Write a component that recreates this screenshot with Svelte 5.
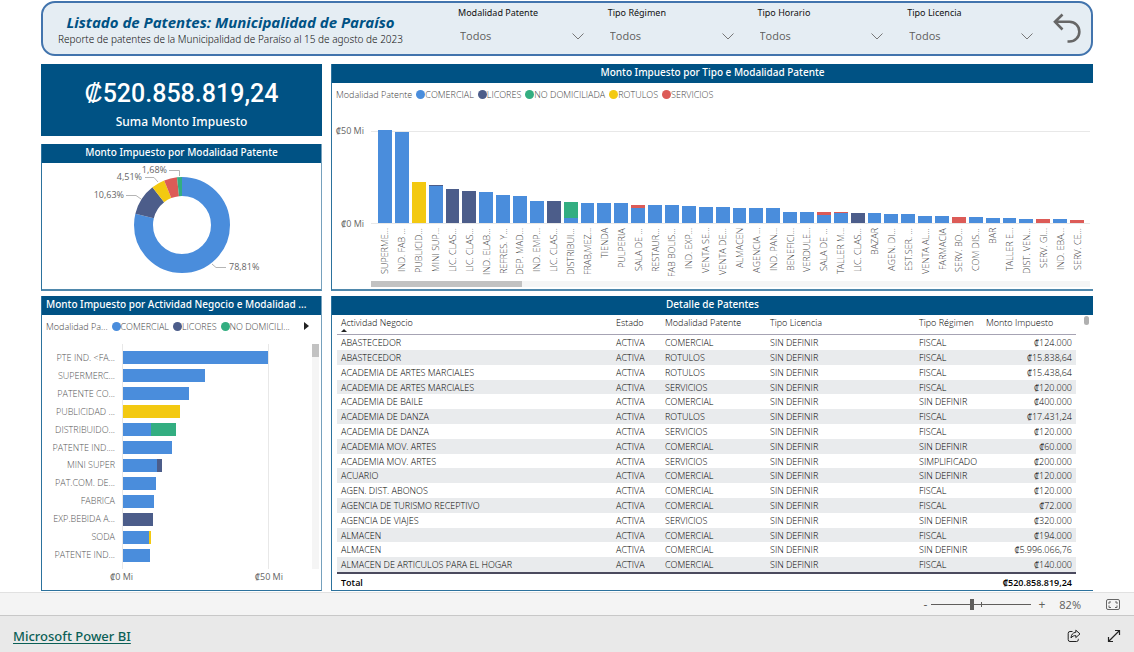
<script>
  const colors = {
    c: '#4a8ddc',
    l: '#4c5d8a',
    n: '#33ae81',
    r: '#f3c911',
    s: '#dc5b57'
  };

  const legend = [
    ['c', 'COMERCIAL'],
    ['l', 'LICORES'],
    ['n', 'NO DOMICILIADA'],
    ['r', 'ROTULOS'],
    ['s', 'SERVICIOS']
  ];

  const shortLegend = [
    ['c', 'COMERCIAL'],
    ['l', 'LICORES'],
    ['n', 'NO DOMICILI...']
  ];

  const filters = ['Modalidad Patente', 'Tipo Régimen', 'Tipo Horario', 'Tipo Licencia'];

  // Each entry: label, then stacked segments from the baseline, in millions.
  const columns = [
    ['SUPERME...', [['c', 51]]],
    ['IND. FAB ...', [['c', 50]]],
    ['PUBLICID...', [['r', 22.5]]],
    ['MINI SUP...', [['c', 20.3], ['l', 0.4]]],
    ['LIC. CLAS...', [['l', 18.6]]],
    ['LIC. CLAS...', [['l', 17.6]]],
    ['IND. ELAB...', [['c', 17.3]]],
    ['REFRES. Y...', [['c', 15.4]]],
    ['DEP. MAD...', [['c', 14.8]]],
    ['IND. EMP...', [['c', 12]]],
    ['LIC. CLAS...', [['l', 12]]],
    ['DISTRIBUI...', [['c', 2.8], ['n', 8.7]]],
    ['FRAB,MEZ...', [['c', 11.2]]],
    ['TIENDA', [['c', 10.9]]],
    ['PULPERIA', [['c', 10.9]]],
    ['SALA DE ...', [['c', 8.5], ['s', 1.6]]],
    ['RESTAUR...', [['c', 9.8]]],
    ['FAB BOLIS...', [['c', 9.8]]],
    ['IND. EXP...', [['c', 9.4]]],
    ['VENTA SE...', [['c', 9]]],
    ['VENTA DE...', [['c', 8.9]]],
    ['ALMACEN', [['c', 8.5]]],
    ['AGENCIA ...', [['c', 8.2]]],
    ['IND. PAN...', [['c', 8.1]]],
    ['BENEFICI...', [['c', 6.3]]],
    ['VERDULE...', [['c', 6.1]]],
    ['SALA DE ...', [['c', 4.6], ['s', 1.4]]],
    ['TALLER M...', [['c', 5.4], ['s', 0.4]]],
    ['LIC. CLAS...', [['l', 5.7]]],
    ['BAZAR', [['c', 5.5]]],
    ['AGEN. DI...', [['c', 5.2]]],
    ['EST.SER. ...', [['c', 5]]],
    ['VENTA AL...', [['c', 4]]],
    ['FARMACIA', [['c', 3.9]]],
    ['SERV. BO...', [['s', 3.3]]],
    ['COM DIS...', [['c', 3.1]]],
    ['BAR', [['c', 2.8]]],
    ['TALLER E...', [['c', 2.5]]],
    ['DIST. VEN...', [['c', 2.4]]],
    ['SERV. GI...', [['s', 2.4]]],
    ['IND. EBA...', [['c', 2.2]]],
    ['SERV. CE...', [['s', 1.9]]]
  ];

  const bars = [
    ['PTE IND. <FA...', [['c', 50]]],
    ['SUPERMERC...', [['c', 28.3]]],
    ['PATENTE CO...', [['c', 22.8]]],
    ['PUBLICIDAD ...', [['r', 19.7]]],
    ['DISTRIBUIDO...', [['c', 9.6], ['n', 8.8]]],
    ['PATENTE IND....', [['c', 16.8]]],
    ['MINI SUPER', [['c', 11.6], ['l', 1.7]]],
    ['PAT.COM. DE...', [['c', 11.5]]],
    ['FABRICA', [['c', 10.6]]],
    ['EXP.BEBIDA A...', [['l', 10.3]]],
    ['SODA', [['c', 9.1], ['r', 0.4]]],
    ['PATENTE IND...', [['c', 9.3]]]
  ];

  const slices = [
    ['c', 78.81, 0],
    ['l', 10.63, 78.81],
    ['r', 4.51, 89.44],
    ['s', 4.37, 93.95],
    ['n', 1.68, 98.32]
  ];

  const rows = [
    ['ABASTECEDOR', 'COMERCIAL', 'FISCAL', '₡124.000'],
    ['ABASTECEDOR', 'ROTULOS', 'FISCAL', '₡15.838,64'],
    ['ACADEMIA DE ARTES MARCIALES', 'ROTULOS', 'FISCAL', '₡15.438,64'],
    ['ACADEMIA DE ARTES MARCIALES', 'SERVICIOS', 'FISCAL', '₡120.000'],
    ['ACADEMIA DE BAILE', 'COMERCIAL', 'SIN DEFINIR', '₡400.000'],
    ['ACADEMIA DE DANZA', 'ROTULOS', 'FISCAL', '₡17.431,24'],
    ['ACADEMIA DE DANZA', 'SERVICIOS', 'FISCAL', '₡120.000'],
    ['ACADEMIA MOV. ARTES', 'COMERCIAL', 'SIN DEFINIR', '₡60.000'],
    ['ACADEMIA MOV. ARTES', 'SERVICIOS', 'SIMPLIFICADO', '₡200.000'],
    ['ACUARIO', 'COMERCIAL', 'SIN DEFINIR', '₡120.000'],
    ['AGEN. DIST. ABONOS', 'COMERCIAL', 'FISCAL', '₡120.000'],
    ['AGENCIA DE TURISMO RECEPTIVO', 'COMERCIAL', 'FISCAL', '₡72.000'],
    ['AGENCIA DE VIAJES', 'SERVICIOS', 'SIN DEFINIR', '₡320.000'],
    ['ALMACEN', 'COMERCIAL', 'FISCAL', '₡194.000'],
    ['ALMACEN', 'COMERCIAL', 'SIN DEFINIR', '₡5.996.066,76'],
    ['ALMACEN DE ARTICULOS PARA EL HOGAR', 'COMERCIAL', 'FISCAL', '₡140.000']
  ];

  let zoom = $state(40);
</script>

<main class="report">
  <header class="banner">
    <div class="heading">
      <h1>Listado de Patentes: Municipalidad de Paraíso</h1>
      <p>Reporte de patentes de la Municipalidad de Paraíso al 15 de agosto de 2023</p>
    </div>
    <div class="filters">
      {#each filters as name, i}
        <div class="filter">
          <label for="filter-{i}">{name}</label>
          <div class="picker">
            <select id="filter-{i}"><option>Todos</option></select>
            <svg width="12" height="7" viewBox="0 0 12 7" aria-hidden="true"><path d="M.5 .5 6 6 11.500 .5" fill="none" stroke="#777" /></svg>
          </div>
        </div>
      {/each}
    </div>
    <button class="back" aria-label="Atrás">
      <svg width="28" height="32" viewBox="0 0 28 32"><path d="M9.500 1.500 2 8.800 9.500 16.500M2 8.800H16.500a9.800 9.800 0 0 1 0 19.700H14.500" fill="none" stroke="#666" stroke-width="2.600" /></svg>
    </button>
  </header>

  <div class="columns">
    <div class="stack">
      <section class="card">
        <strong>₡520.858.819,24</strong>
        <span>Suma Monto Impuesto</span>
      </section>

      <section class="panel closed">
        <h2>Monto Impuesto por Modalidad Patente</h2>
        <svg class="donut" width="280" height="126" viewBox="0 0 280 126">
          <g transform="rotate(-90 140 62)">
            {#each slices as [key, share, start]}
              <circle cx="140" cy="62" r="38.500" fill="none" stroke={colors[key]} stroke-width="19" pathLength="100" stroke-dasharray="{share} {100 - share}" stroke-dashoffset={-start} />
            {/each}
          </g>
          <g fill="none" stroke="#b5b5b5">
            <path d="M170 101 174 104.500H184" />
            <path d="M84 32.500H94L99 36" />
            <path d="M103 14.500H112L116 19" />
            <path d="M127 7.500H137.500V13" />
          </g>
          <g class="donut-text">
            <text x="187" y="107">78,81%</text>
            <text x="82" y="35" text-anchor="end">10,63%</text>
            <text x="100" y="17" text-anchor="end">4,51%</text>
            <text x="125" y="10" text-anchor="end">1,68%</text>
          </g>
        </svg>
      </section>

      <section class="panel closed bottom">
        <h2 class="start">Monto Impuesto por Actividad Negocio e Modalidad ...</h2>
        <div class="legend">
          <span class="legend-title">Modalidad Pa...</span>
          {#each shortLegend as [key, name]}
            <span class="key"><i style="background:{colors[key]}"></i>{name}</span>
          {/each}
          <button class="next" aria-label="Siguiente"><svg width="5" height="8" viewBox="0 0 5 8"><path d="M0 0 5 4 0 8Z" fill="#222" /></svg></button>
        </div>
        <div class="bar-chart">
          <div class="bar-names">
            {#each bars as [name]}<span>{name}</span>{/each}
          </div>
          <div class="bar-plot">
            {#each bars as [, parts]}
              <div class="bar">
                {#each parts as [key, value]}<i style="width:{value * 2}%;background:{colors[key]}"></i>{/each}
              </div>
            {/each}
          </div>
          <div class="vscroll"><i></i></div>
          <div class="bar-axis"><span>₡0 Mi</span><span>₡50 Mi</span></div>
        </div>
      </section>
    </div>

    <div class="stack">
      <section class="panel">
        <h2>Monto Impuesto por Tipo e Modalidad Patente</h2>
        <div class="legend">
          <span class="legend-title">Modalidad Patente</span>
          {#each legend as [key, name]}
            <span class="key"><i style="background:{colors[key]}"></i>{name}</span>
          {/each}
        </div>
        <div class="col-chart">
          <div class="col-axis"><span>₡50 Mi</span><span>₡0 Mi</span></div>
          <div class="col-plot">
            {#each columns as [, parts]}
              <div class="col">
                {#each parts as [key, value]}<i style="height:{value * 2}%;background:{colors[key]}"></i>{/each}
              </div>
            {/each}
          </div>
          <div class="col-names">
            {#each columns as [name]}<span>{name}</span>{/each}
          </div>
          <div class="hscroll"><i></i></div>
        </div>
      </section>

      <section class="panel bottom">
        <h2>Detalle de Patentes</h2>
        <div class="table-area">
          <table>
            <colgroup><col /><col class="w-est" /><col class="w-mod" /><col class="w-lic" /><col class="w-reg" /><col class="w-amt" /></colgroup>
            <thead>
              <tr>
                <th class="sorted">Actividad Negocio</th><th>Estado</th><th>Modalidad Patente</th><th>Tipo Licencia</th><th>Tipo Régimen</th><th>Monto Impuesto</th>
              </tr>
            </thead>
            <tbody>
              {#each rows as [activity, mode, regime, amount]}
                <tr><td>{activity}</td><td>ACTIVA</td><td>{mode}</td><td>SIN DEFINIR</td><td>{regime}</td><td class="amount">{amount}</td></tr>
              {/each}
            </tbody>
            <tfoot>
              <tr><td colspan="4">Total</td><td colspan="2" class="amount">₡520.858.819,24</td></tr>
            </tfoot>
          </table>
          <i class="thumb"></i>
        </div>
      </section>
    </div>
  </div>
</main>

<div class="status">
  <button aria-label="Alejar">-</button>
  <div class="slider">
    <input type="range" min="0" max="100" bind:value={zoom} aria-label="Zoom" />
    <i></i>
  </div>
  <button aria-label="Acercar">+</button>
  <span class="percent">82%</span>
  <button class="fit" aria-label="Ajustar a la página">
    <svg width="14" height="11" viewBox="0 0 14 11" fill="none" stroke="#666"><rect x=".5" y=".5" width="13" height="10" rx="1.500" /><path d="M5 3H3V5M3 6.500V8.500H5M9 3H11V5M11 6.500V8.500H9" /></svg>
  </button>
</div>

<footer>
  <a href="#powerbi">Microsoft Power BI</a>
  <button aria-label="Compartir">
    <svg width="14" height="14" viewBox="0 0 14 14" fill="none" stroke="#222" stroke-linejoin="round"><path d="M5.500 2.500H3A1.800 1.800 0 0 0 1.200 4.300V10.700A1.800 1.800 0 0 0 3 12.500H9.500A1.800 1.800 0 0 0 11.300 10.700V9.800" /><path d="M8.800 1.200 13 4.900 8.800 8.600V6.600C6.600 6.500 5.300 7.300 4 9 4.200 5.800 5.800 3.500 8.800 3.300Z" /></svg>
  </button>
  <button aria-label="Pantalla completa">
    <svg width="14" height="14" viewBox="0 0 14 14" fill="none" stroke="#222" stroke-width="1.200"><path d="M1.500 12.500 12.500 1.500M8 1.500H12.500V6M1.500 8V12.500H6" /></svg>
  </button>
</footer>

<style>
  :global(body) {
    background: #fff;
    font-family: "Open Sans", "Noto Sans", sans-serif;
  }
  h1, h2, p { margin: 0; }
  i { display: block; font-style: normal; }
  svg { display: block; }
  button {
    padding: 0;
    border: 0;
    background: none;
    font: inherit;
    color: inherit;
  }

  .report { padding: 1px 41px 0; }
  .banner {
    display: flex;
    box-sizing: border-box;
    height: 55px;
    border: 2px solid #4274ad;
    border-radius: 14px;
    background: #e5edf3;
  }
  .heading {
    width: 375px;
    flex: none;
    padding-top: 10px;
    text-align: center;
    white-space: nowrap;
  }
  h1 {
    font-size: 15px;
    line-height: 18px;
    font-style: italic;
    font-weight: 700;
    color: #005284;
  }
  p {
    font-family: "Noto Sans", sans-serif;
    font-size: 10px;
    line-height: 17px;
    font-weight: 300;
    color: #111;
  }
  .filters {
    flex: 1;
    display: grid;
    grid-template-columns: repeat(4, 1fr);
    column-gap: 24px;
    padding-left: 40px;
    padding-top: 3px;
  }
  label {
    display: block;
    font-family: "Noto Sans", sans-serif;
    font-size: 9px;
    line-height: 14px;
    color: #111;
  }
  .picker {
    display: flex;
    align-items: center;
    margin-top: 7px;
  }
  select {
    flex: 1;
    appearance: none;
    border: 0;
    padding: 0 2px;
    background: none;
    font: 11px/18px "Open Sans", sans-serif;
    color: #605e5c;
  }
  .back { width: 58px; flex: none; padding: 0 10px 0 20px; }

  .columns {
    display: grid;
    grid-template-columns: minmax(0, 281fr) minmax(0, 762fr);
    column-gap: 9px;
    padding-top: 8px;
  }
  .stack { display: flex; flex-direction: column; }
  .card {
    display: flex;
    flex-direction: column;
    align-items: center;
    padding: 14px 0 2px;
    margin-bottom: 8px;
    background: #005284;
    color: #fff;
  }
  .card strong {
    font: 500 25px/32px Roboto, sans-serif;
  }
  .card span {
    font-family: "Noto Sans", sans-serif;
    font-size: 12px;
    line-height: 24px;
    font-weight: 500;
  }

  .panel {
    border-left: 1px solid #2c729d;
    border-bottom: 2px solid #4f88ac;
    margin-bottom: 5px;
  }
  .closed { border-right: 1px solid #76a1bd; }
  .bottom {
    flex: 1;
    margin-bottom: 1px;
    border-bottom: 1px solid #2c729d;
  }
  h2 {
    height: 19px;
    background: #005284;
    color: #fff;
    font-family: "Noto Sans", sans-serif;
    font-size: 10px;
    line-height: 17px;
    font-weight: 500;
    text-align: center;
    white-space: nowrap;
    overflow: hidden;
  }
  h2.start { padding-left: 4px; text-align: left; }
  .donut { margin: 0 auto; }
  .donut-text { font-size: 9px; fill: #666; }

  .legend {
    display: flex;
    align-items: center;
    height: 22px;
    padding-left: 4px;
    gap: 4px;
    font-size: 9px;
    font-weight: 350;
    color: #444;
    white-space: nowrap;
  }
  .key { display: flex; align-items: center; }
  .key i { width: 9px; height: 9px; border-radius: 50%; }
  .next { margin-left: auto; margin-right: 12px; }

  .bar-chart {
    display: grid;
    grid-template-columns: 73px minmax(0, 1fr) 7px;
    column-gap: 7px;
    padding-right: 2px;
    margin-top: 7px;
  }
  .bar-names, .bar-plot {
    display: grid;
    grid-template-rows: repeat(12, 1fr);
    height: 215px;
    padding: 5px 0;
    align-items: center;
  }
  .bar-names {
    font-size: 9px;
    line-height: 12px;
    font-weight: 350;
    text-align: right;
    color: #555;
    white-space: nowrap;
  }
  .bar-plot {
    margin-right: 36px;
    border-left: 1px solid #e8e8e8;
    border-right: 1px solid #e8e8e8;
  }
  .bar { display: flex; height: 13px; }
  .vscroll { background: #f5f5f5; }
  .vscroll i { height: 13px; background: #c2c2c2; }
  .bar-axis {
    grid-column: 2;
    display: flex;
    justify-content: space-between;
    margin: 0 22px 0 -12px;
    font-size: 9px;
    line-height: 16px;
    color: #666;
  }

  .col-chart {
    display: grid;
    grid-template-columns: 32px minmax(0, 1fr);
    column-gap: 7px;
    padding: 26px 3px 2px 0;
    font-size: 9px;
    color: #666;
  }
  .col-axis {
    display: flex;
    flex-direction: column;
    justify-content: space-between;
    margin: -6px 0;
    line-height: 12px;
    text-align: right;
  }
  .col-plot, .col-names {
    display: grid;
    grid-template-columns: repeat(42, 1fr);
    padding: 0 4px 0 6px;
  }
  .col-plot {
    height: 91px;
    border-top: 1px solid #e8e8e8;
    border-bottom: 1px solid #e8e8e8;
  }
  .col {
    display: flex;
    flex-direction: column-reverse;
    height: 91px;
    margin: 0 2px 0 1px;
  }
  .col i { flex: none; }
  .col-names {
    grid-column: 2;
    height: 54px;
    padding-top: 4px;
    box-sizing: border-box;
    font-weight: 350;
    color: #444;
  }
  .col-names span {
    writing-mode: vertical-rl;
    transform: rotate(180deg);
    text-align: right;
    justify-self: center;
    line-height: 12px;
    white-space: nowrap;
  }
  .hscroll {
    grid-column: 2;
    margin-top: 3px;
    height: 6px;
    background: #f5f5f5;
  }
  .hscroll i { width: 21%; height: 6px; background: #c2c2c2; }

  .table-area {
    display: flex;
    align-items: flex-start;
    padding: 0 4px 0 5px;
  }
  table {
    flex: 1;
    width: 100%;
    table-layout: fixed;
    border-collapse: collapse;
    font-size: 9px;
    line-height: 13px;
    color: #000;
    white-space: nowrap;
  }
  .w-est { width: 49px; }
  .w-mod { width: 105px; }
  .w-lic { width: 149px; }
  .w-reg { width: 67px; }
  .w-amt { width: 94px; }
  th, td { padding: 0 4px; text-align: left; font-weight: 350; }
  th {
    height: 18px;
    border-bottom: 1px solid #a6a3b3;
    vertical-align: top;
  }
  thead th { padding-top: 1px; }
  .sorted::after {
    content: "";
    display: block;
    width: 0;
    border: 3px solid transparent;
    border-top: 0;
    border-bottom-color: #222;
  }
  tbody td { height: 15px; }
  tbody tr:nth-child(5n + 4) td { height: 14px; }
  tbody tr:nth-child(even) { background: #e9ebed; }
  td.amount { text-align: right; }
  tfoot td {
    height: 16px;
    border-top: 2px solid #4b4a5e;
    font-weight: 600;
  }
  .thumb {
    flex: none;
    width: 5px;
    height: 9px;
    margin: 1px 0 0 8px;
    border-radius: 3px;
    background: #b0b0b0;
  }

  .status {
    display: flex;
    align-items: center;
    justify-content: flex-end;
    height: 22px;
    padding-right: 14px;
    border-top: 1px solid #e1e1e1;
    background: #f4f4f4;
    color: #605e5c;
    font-size: 12px;
  }
  .slider { position: relative; width: 100px; margin: 0 7px 0 4px; height: 12px; }
  .slider i {
    position: absolute;
    left: 50%;
    top: 4px;
    width: 1px;
    height: 5px;
    background: #605e5c;
  }
  input {
    display: block;
    appearance: none;
    width: 100%;
    height: 12px;
    margin: 0;
    background: linear-gradient(#605e5c, #605e5c) center / 100% 1px no-repeat;
  }
  input::-webkit-slider-thumb {
    appearance: none;
    width: 4px;
    height: 11px;
    background: #605e5c;
  }
  .percent { margin: 0 25px 0 14px; font-size: 11px; }

  footer {
    display: flex;
    align-items: center;
    padding: 3px 13px 0 13px;
    box-sizing: border-box;
    border-top: 1px solid #c8c8c8;
    height: 37px;
    gap: 26px;
    background: #e9e9e9;
  }
  footer a {
    margin-right: auto;
    font-family: "Noto Sans", sans-serif;
    font-size: 13px;
    font-weight: 500;
    color: #0b5f56;
    text-underline-offset: 2px;
  }
</style>
